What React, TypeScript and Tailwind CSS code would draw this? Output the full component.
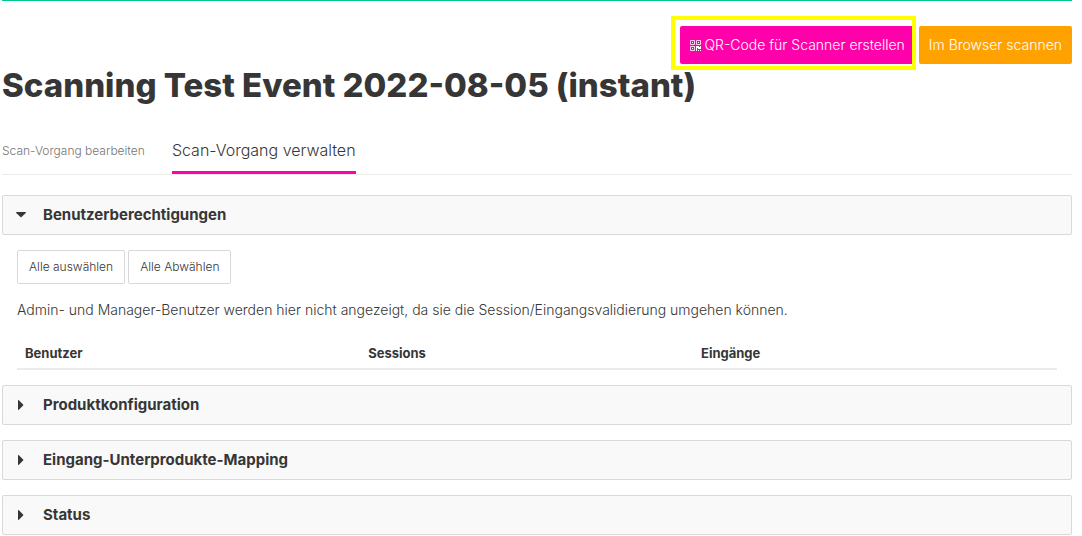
import React, { useState } from "react";

import clsx from "clsx";

const QrIcon = () => (
  <svg viewBox="0 0 11 11" className="h-[11px] w-[11px] shrink-0" fill="none" stroke="currentColor" aria-hidden="true">
    <path strokeWidth=".8" d="M.5.5h4v4h-4zM6.5.5h4v4h-4zM.5 6.5h4v4h-4z" />
    <path d="M2 2h1v1H2zM8 2h1v1H8zM2 8h1v1H2zM6 6h3v1h1V6h1v3H8V8H7v3H6zM8 10h1v1H8zM10 10h1v1h-1z" fill="currentColor" stroke="none" />
  </svg>
);

const Caret = ({ open }: { open: boolean }) => (
  <svg viewBox="0 0 10 10" className="h-[10px] w-[10px] shrink-0" fill="currentColor" aria-hidden="true">
    {open ? (
      <path d="M.6 2h8.8c.5 0 .7.6.4.9L5.5 7.1a.7.7 0 0 1-1 0L.2 2.9C-.1 2.6.1 2 .6 2z" />
    ) : (
      <path d="M2 .6v8.8c0 .5.6.7.9.4l4.2-4.300a.7.7 0 0 0 0-1L2.900.2C2.600-.1 2 .1 2 .6z" />
    )}
  </svg>
);

type PanelProps = {
  title: string;
  defaultOpen?: boolean;
  children?: React.ReactNode;
};

const Panel = ({ title, defaultOpen = false, children }: PanelProps) => {
  const [open, setOpen] = useState(defaultOpen);

  return (
    <section>
      <h2>
        <button
          type="button"
          aria-expanded={open}
          onClick={() => setOpen(!open)}
          className="flex h-10 w-full items-center gap-[17px] rounded-xs border border-[#d9d9d9] bg-[#f9f9f9] px-[13px] text-left text-[15px] font-bold"
        >
          <Caret open={open} />
          {title}
        </button>
      </h2>
      {open && children && <div className="px-[15px] pt-[15px]">{children}</div>}
    </section>
  );
};

const smallButton = "h-[34px] rounded-xs border border-[#d9d9d9] bg-white px-[11px] text-xs font-light";
const actionButton = "flex h-[38px] items-center gap-[3px] rounded-xs px-[10px] text-sm font-light text-white";

const UserPermissions = () => (
  <>
    <div className="flex gap-[3px]">
      <button type="button" className={smallButton}>Alle auswählen</button>
      <button type="button" className={smallButton}>Alle Abwählen</button>
    </div>
    <p className="mt-4 text-sm font-light leading-5">
      Admin- und Manager-Benutzer werden hier nicht angezeigt, da sie die Session/Eingangsvalidierung umgehen können.
    </p>
    <table className="mt-4 w-full table-fixed text-left text-[13px]">
      <thead>
        <tr className="border-b-2 border-[#ebebeb]">
          <th className="h-[33px] w-[33%] px-2 pt-[3px] font-bold">Benutzer</th>
          <th className="w-[32%] px-2 pt-[3px] font-bold">Sessions</th>
          <th className="px-2 pt-[3px] font-bold">Eingänge</th>
        </tr>
      </thead>
    </table>
  </>
);

const App = () => (
  <main className="bg-white pl-[2px] pr-[10px] font-['Inter',sans-serif] text-[#363636]">
    <div className="h-px bg-[#00c78c]" />

    <div className="flex justify-end gap-1 pt-[25px]">
      <div className="relative">
        <button type="button" className={clsx(actionButton, "bg-[#ff00aa]")}>
          <QrIcon />
          QR-Code für Scanner erstellen
        </button>
        <span className="pointer-events-none absolute -bottom-[6px] -left-[9px] -right-px -top-[10px] border-4 border-[#ffff00]" />
      </div>
      <button type="button" className={clsx(actionButton, "bg-[#ffa200]")}>Im Browser scannen</button>
    </div>

    <h1 className="text-[33px] font-extrabold leading-[42px]">Scanning Test Event 2022-08-05 (instant)</h1>

    <nav className="mt-[21px] flex items-stretch gap-[27px] border-b border-[#ebebeb]">
      <a href="#edit" className="flex h-[47px] items-center text-xs font-light text-[#757575]">Scan-Vorgang bearbeiten</a>
      <a href="#manage" aria-current="page" className="flex h-[47px] items-center border-b-[3px] border-[#ff00aa] pt-px text-base font-light">
        Scan-Vorgang verwalten
      </a>
    </nav>

    <div className="mt-5 flex flex-col gap-[15px]">
      <Panel title="Benutzerberechtigungen" defaultOpen>
        <UserPermissions />
      </Panel>
      <Panel title="Produktkonfiguration" />
      <Panel title="Eingang-Unterprodukte-Mapping" />
      <Panel title="Status" />
    </div>
  </main>
);

export default App;
